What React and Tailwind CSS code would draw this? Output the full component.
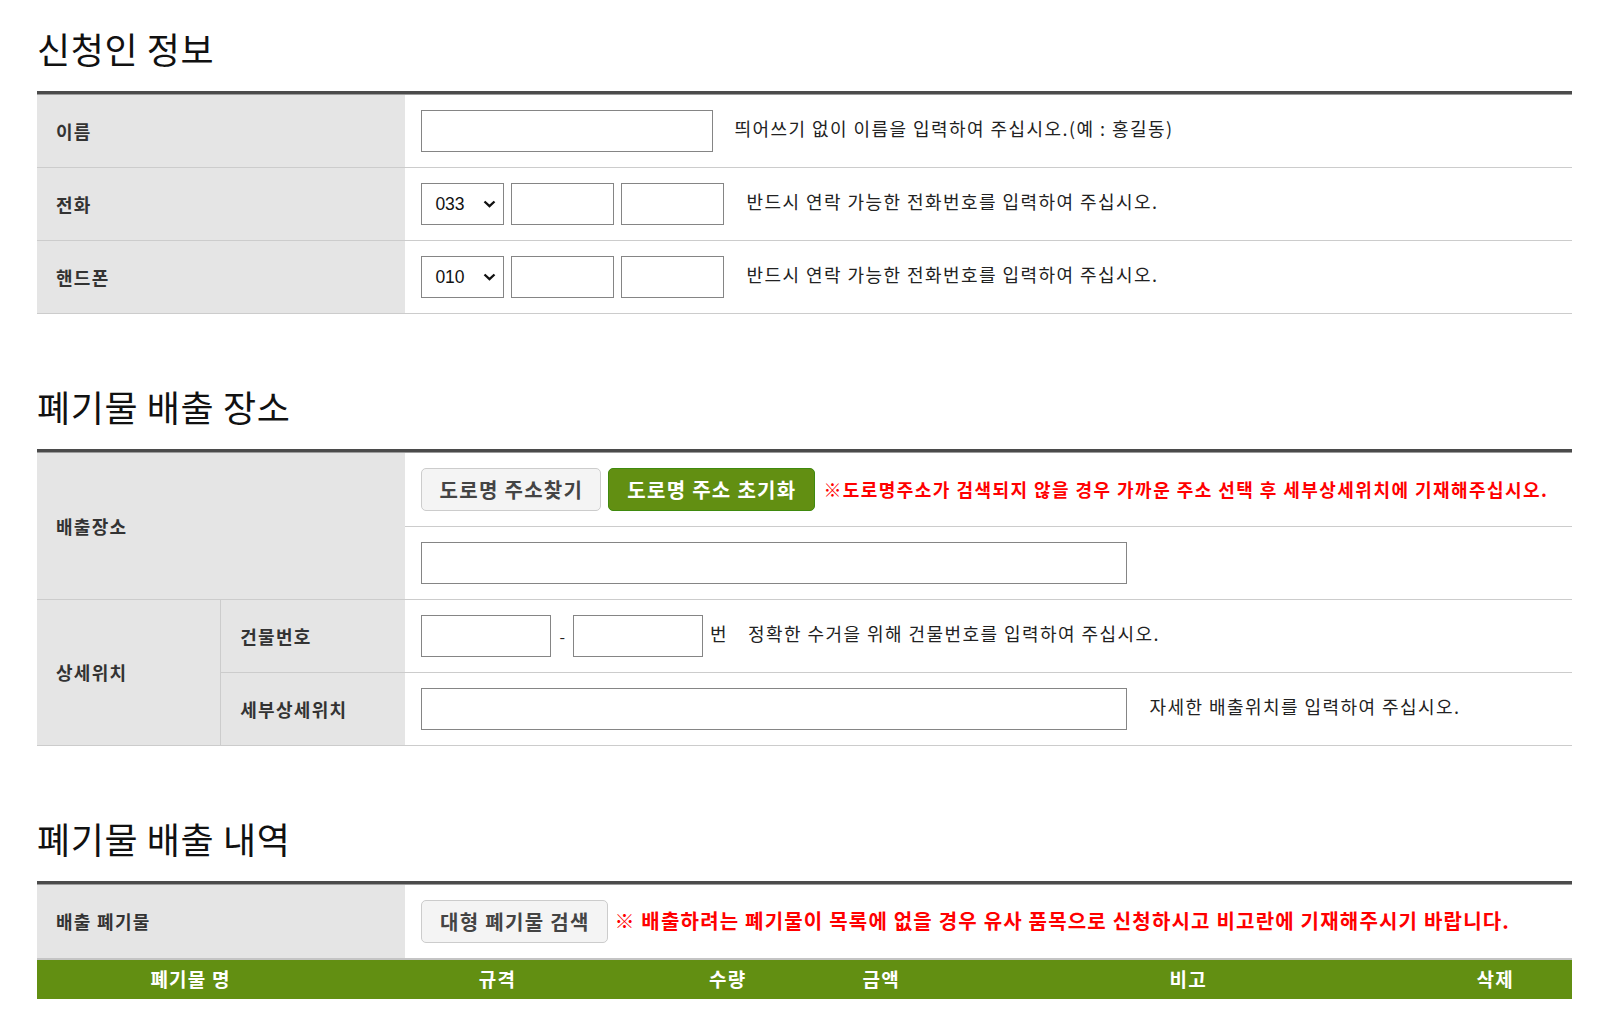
import React from "react";

function TopRule() {
  return (
    <div>
      <div className="h-[3px] bg-[#4b4b4b]" />
      <div className="h-px bg-[#9c9c9c]" />
    </div>
  );
}

function Heading({ children }) {
  return (
    <h2 className="h-[40px] leading-[40px] text-[36px] tracking-[0.6px] font-normal text-[#111] mb-[23px]">
      {children}
    </h2>
  );
}

function Label({ children, className = "" }) {
  return (
    <div className={"bg-[#e5e5e5] flex items-center pl-[19px] text-[18px] tracking-[1.3px] font-bold text-[#333] " + className}>
      {children}
    </div>
  );
}

function Field({ className = "" }) {
  return <input type="text" className={"h-[42px] border border-[#858585] bg-white outline-none " + className} />;
}

function PhoneSelect({ value }) {
  return (
    <div className="relative w-[83px] h-[42px]">
      <select
        defaultValue={value}
        className="appearance-none w-full h-full border border-[#858585] bg-white pl-[13px] text-[17.5px] text-[#111] font-['Liberation_Sans',sans-serif] outline-none"
      >
        <option value={value}>{value}</option>
      </select>
      <svg
        className="pointer-events-none absolute right-[8px] top-[17px]"
        width="13"
        height="8"
        viewBox="0 0 13 8"
      >
        <path d="M1.5 1.5 L6.5 6.2 L11.5 1.5" stroke="#111" strokeWidth="2.3" fill="none" />
      </svg>
    </div>
  );
}

function Help({ children, className = "" }) {
  return <span className={"mb-[6px] text-[18px] tracking-[1.45px] text-[#222] " + className}>{children}</span>;
}

function Warn({ children, className = "" }) {
  return <span className={"font-bold text-[#ff0000] " + className}>{children}</span>;
}

export default function App() {
  return (
    <div className="bg-white min-h-[1014px] font-['Noto_Sans_CJK_KR','Noto_Sans',sans-serif]">
      <div className="ml-[37px] w-[1535px] pt-[28px]">
        {/* 신청인 정보 */}
        <section>
          <Heading>신청인 정보</Heading>
          <TopRule />
          <div className="grid grid-cols-[24%_76%]">
            <Label className="h-[73px] border-b border-[#cccccc]">이름</Label>
            <div className="h-[73px] border-b border-[#cccccc] flex items-center pl-[16px]">
              <Field className="w-[292px]" />
              <Help className="ml-[21px]">띄어쓰기 없이 이름을 입력하여 주십시오.(예 : 홍길동)</Help>
            </div>

            <Label className="h-[73px] border-b border-[#cccccc]">전화</Label>
            <div className="h-[73px] border-b border-[#cccccc] flex items-center pl-[16px] gap-[7px]">
              <PhoneSelect value="033" />
              <Field className="w-[103px]" />
              <Field className="w-[103px]" />
              <Help className="ml-[15px]">반드시 연락 가능한 전화번호를 입력하여 주십시오.</Help>
            </div>

            <Label className="h-[73px] border-b border-[#cccccc]">핸드폰</Label>
            <div className="h-[73px] border-b border-[#cccccc] flex items-center pl-[16px] gap-[7px]">
              <PhoneSelect value="010" />
              <Field className="w-[103px]" />
              <Field className="w-[103px]" />
              <Help className="ml-[15px]">반드시 연락 가능한 전화번호를 입력하여 주십시오.</Help>
            </div>
          </div>
        </section>

        {/* 폐기물 배출 장소 */}
        <section className="mt-[72px]">
          <Heading>폐기물 배출 장소</Heading>
          <TopRule />
          <div className="grid grid-cols-[12%_12%_76%]">
            <Label className="col-span-2 row-span-2 border-b border-[#cccccc]">배출장소</Label>
            <div className="h-[74px] border-b border-[#cccccc] flex items-center pl-[16px]">
              <button className="h-[43px] w-[180px] rounded-[5px] border border-[#cccccc] bg-[#f4f4f4] text-[20px] tracking-[1.3px] font-bold text-[#444]">
                도로명 주소찾기
              </button>
              <button className="ml-[7px] h-[43px] w-[207px] rounded-[5px] border border-[#3f8a0e] bg-[#628f12] text-[20px] tracking-[1.3px] font-bold text-white">
                도로명 주소 초기화
              </button>
              <Warn className="ml-[8px] text-[18px] tracking-[1.45px]">※도로명주소가 검색되지 않을 경우 가까운 주소 선택 후 세부상세위치에 기재해주십시오.</Warn>
            </div>
            <div className="h-[73px] border-b border-[#cccccc] flex items-center pl-[16px]">
              <Field className="w-[706px]" />
            </div>

            <Label className="row-span-2 border-b border-r border-[#cccccc]">상세위치</Label>
            <Label className="h-[73px] border-b border-[#cccccc]">건물번호</Label>
            <div className="h-[73px] border-b border-[#cccccc] flex items-center pl-[16px]">
              <Field className="w-[130px]" />
              <span className="mx-[8px] text-[16px] text-[#222]">-</span>
              <Field className="w-[130px]" />
              <Help className="ml-[7px]">번</Help>
              <Help className="ml-[20px]">정확한 수거을 위해 건물번호를 입력하여 주십시오.</Help>
            </div>

            <Label className="h-[73px] border-b border-[#cccccc]">세부상세위치</Label>
            <div className="h-[73px] border-b border-[#cccccc] flex items-center pl-[16px]">
              <Field className="w-[706px]" />
              <Help className="ml-[22px]">자세한 배출위치를 입력하여 주십시오.</Help>
            </div>
          </div>
        </section>

        {/* 폐기물 배출 내역 */}
        <section className="mt-[72px]">
          <Heading>폐기물 배출 내역</Heading>
          <TopRule />
          <div className="grid grid-cols-[24%_76%]">
            <Label className="h-[73px]">배출 폐기물</Label>
            <div className="h-[73px] flex items-center pl-[16px]">
              <button className="h-[43px] w-[187px] rounded-[5px] border border-[#cccccc] bg-[#f4f4f4] text-[20px] tracking-[1.3px] font-bold text-[#444]">
                대형 폐기물 검색
              </button>
              <Warn className="ml-[6px] mb-[1px] text-[20px] tracking-[1.2px]">※ 배출하려는 폐기물이 목록에 없을 경우 유사 품목으로 신청하시고 비고란에 기재해주시기 바랍니다.</Warn>
            </div>
          </div>
          <div className="grid grid-cols-[20%_20%_10%_10%_30%_10%] h-[41px] border-t-2 border-[#c4c4c4] bg-[#628f12] text-white text-[19px] tracking-[1.2px] font-bold">
            <div className="flex items-center justify-center">폐기물 명</div>
            <div className="flex items-center justify-center">규격</div>
            <div className="flex items-center justify-center">수량</div>
            <div className="flex items-center justify-center">금액</div>
            <div className="flex items-center justify-center">비고</div>
            <div className="flex items-center justify-center">삭제</div>
          </div>
        </section>
      </div>
    </div>
  );
}
